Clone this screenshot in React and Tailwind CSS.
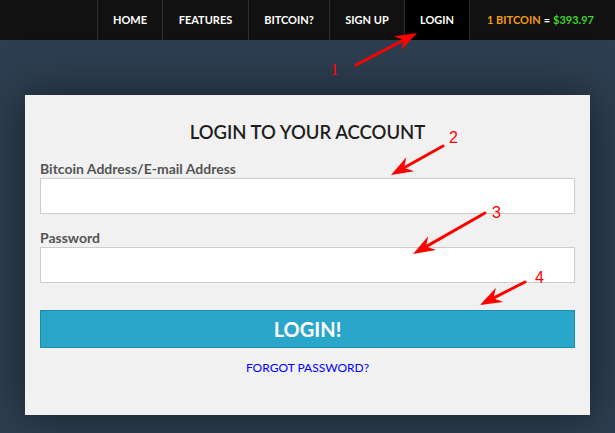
import React from 'react'

const navItems = [
  { label: 'HOME', w: 'w-[65px]' },
  { label: 'FEATURES', w: 'w-[86px]' },
  { label: 'BITCOIN?', w: 'w-[81px]' },
  { label: 'SIGN UP', w: 'w-[75px]' },
  { label: 'LOGIN', w: 'w-[65px]', active: true },
]

function Arrow({ x1, y1, x2, y2 }) {
  // draw the shaft and a swept head pointing at (x2, y2)
  const dx = x2 - x1
  const dy = y2 - y1
  const len = Math.hypot(dx, dy)
  const ux = dx / len
  const uy = dy / len
  const px = -uy
  const py = ux
  const back = 22
  const wide = 8
  const bx = x2 - ux * back
  const by = y2 - uy * back
  const nx = x2 - ux * (back - 7)
  const ny = y2 - uy * (back - 7)
  const head = `${x2},${y2} ${bx + px * wide},${by + py * wide} ${nx},${ny} ${bx - px * wide},${by - py * wide}`
  return (
    <g>
      <line x1={x1} y1={y1} x2={nx} y2={ny} stroke="#ff0000" strokeWidth="3" strokeLinecap="round" />
      <polygon points={head} fill="#ff0000" />
    </g>
  )
}

function Annotations() {
  return (
    <svg className="absolute left-0 top-0 pointer-events-none" width="615" height="433" viewBox="0 0 615 433">
      <Arrow x1={356} y1={65} x2={417} y2={33} />
      <Arrow x1={443} y1={146} x2={391} y2={175} />
      <Arrow x1={485} y1={213} x2={413} y2={254} />
      <Arrow x1={525} y1={282} x2={480} y2={305} />
      <text x="330" y="75" fill="#ff0000" fontSize="17" fontFamily="Liberation Serif, serif">1</text>
      <text x="449" y="143" fill="#ff0000" fontSize="16" fontFamily="Liberation Sans, sans-serif">2</text>
      <text x="492" y="218" fill="#ff0000" fontSize="16" fontFamily="Liberation Sans, sans-serif">3</text>
      <text x="535" y="283" fill="#ff0000" fontSize="16" fontFamily="Liberation Sans, sans-serif">4</text>
    </svg>
  )
}

export default function App() {
  return (
    <div className="relative w-[615px] h-[433px] overflow-hidden bg-[#2d3e50] font-['Lato','Liberation_Sans',sans-serif]">
      {/* top nav */}
      <nav className="h-[40px] bg-[#111111] flex pl-[97px]">
        {navItems.map((item) => (
          <a
            key={item.label}
            className={`${item.w} h-full flex items-center justify-center border-l border-[#2e2e2e] text-[11px] font-bold text-white ${item.active ? 'bg-black' : ''}`}
          >
            {item.label}
          </a>
        ))}
        <div className="h-full flex items-center pl-[17px] border-l border-[#2e2e2e] text-[11px] font-bold whitespace-nowrap">
          <span className="text-[#f39c12]">1 BITCOIN</span>
          <span className="text-white mx-[3px]">=</span>
          <span className="text-[#3fd42a]">$393.97</span>
        </div>
      </nav>

      {/* login card */}
      <div className="px-[25px] pt-[55px]">
        <div className="w-[565px] bg-[#f1f1f1] px-[15px] pt-[25px] pb-[40px] shadow-[0_0_40px_rgba(0,0,0,0.5)]">
          <h2 className="text-center text-[18.5px] leading-[24px] font-semibold text-[#1e1e1e]">LOGIN TO YOUR ACCOUNT</h2>

          <label className="block mt-[17px] text-[14px] leading-[16px] font-bold text-[#555555]">Bitcoin Address/E-mail Address</label>
          <input className="block mt-[1px] w-full h-[36px] bg-white border border-[#cccccc] outline-none" />

          <label className="block mt-[16px] text-[14px] leading-[16px] font-bold text-[#555555]">Password</label>
          <input type="password" className="block mt-[1px] w-full h-[36px] bg-white border border-[#cccccc] outline-none" />

          <button className="mt-[27px] w-full h-[38px] bg-[#2aa6cb] border border-[#1d8cae] text-white text-[20px] font-bold">
            LOGIN!
          </button>

          <div className="mt-[13px] text-center text-[12px] leading-[14px] text-[#0000ff]">FORGOT PASSWORD?</div>
        </div>
      </div>

      <Annotations />
    </div>
  )
}
